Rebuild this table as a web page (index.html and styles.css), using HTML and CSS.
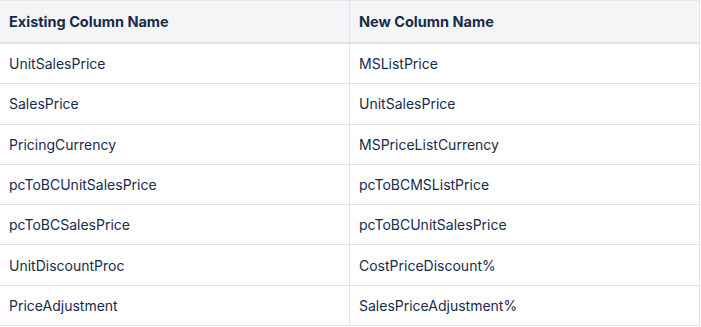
FILE: index.html
```html
<!DOCTYPE html>
<html lang="en">
<head>
  <meta charset="UTF-8">
  <title>Column Mapping</title>
  <link rel="stylesheet" href="styles.css">
</head>
<body>
<table class="mapping">
  <thead>
    <tr>
      <th>Existing Column Name</th>
      <th>New Column Name</th>
    </tr>
  </thead>
  <tbody>
    <tr><td>UnitSalesPrice</td><td>MSListPrice</td></tr>
    <tr><td>SalesPrice</td><td>UnitSalesPrice</td></tr>
    <tr><td>PricingCurrency</td><td>MSPriceListCurrency</td></tr>
    <tr><td>pcToBCUnitSalesPrice</td><td>pcToBCMSListPrice</td></tr>
    <tr><td>pcToBCSalesPrice</td><td>pcToBCUnitSalesPrice</td></tr>
    <tr><td>UnitDiscountProc</td><td>CostPriceDiscount%</td></tr>
    <tr><td>PriceAdjustment</td><td>SalesPriceAdjustment%</td></tr>
  </tbody>
</table>
</body>
</html>
```

FILE: styles.css
```css
body {
  margin: 0;
  background: #fff;
  font-family: Inter, 'Noto Sans', sans-serif;
  color: #172b4d;
}
.mapping {
  width: 700px;
  border-collapse: collapse;
  table-layout: fixed;
  border-top: 1px solid #e4e6ea;
}
.mapping th,
.mapping td {
  text-align: left;
  padding: 0 9px;
  border: 1px solid #dfe1e6;
  border-top: none;
}
.mapping th:first-child,
.mapping td:first-child {
  width: 331px;
  border-left: none;
}
.mapping th {
  height: 41px;
  background-color: #f4f5f7;
  font-size: 14.5px;
  font-weight: 700;
  border-bottom: 2px solid #dfe1e6;
}
.mapping td {
  height: 39.3px;
  font-size: 14px;
  font-weight: 400;
}
```
